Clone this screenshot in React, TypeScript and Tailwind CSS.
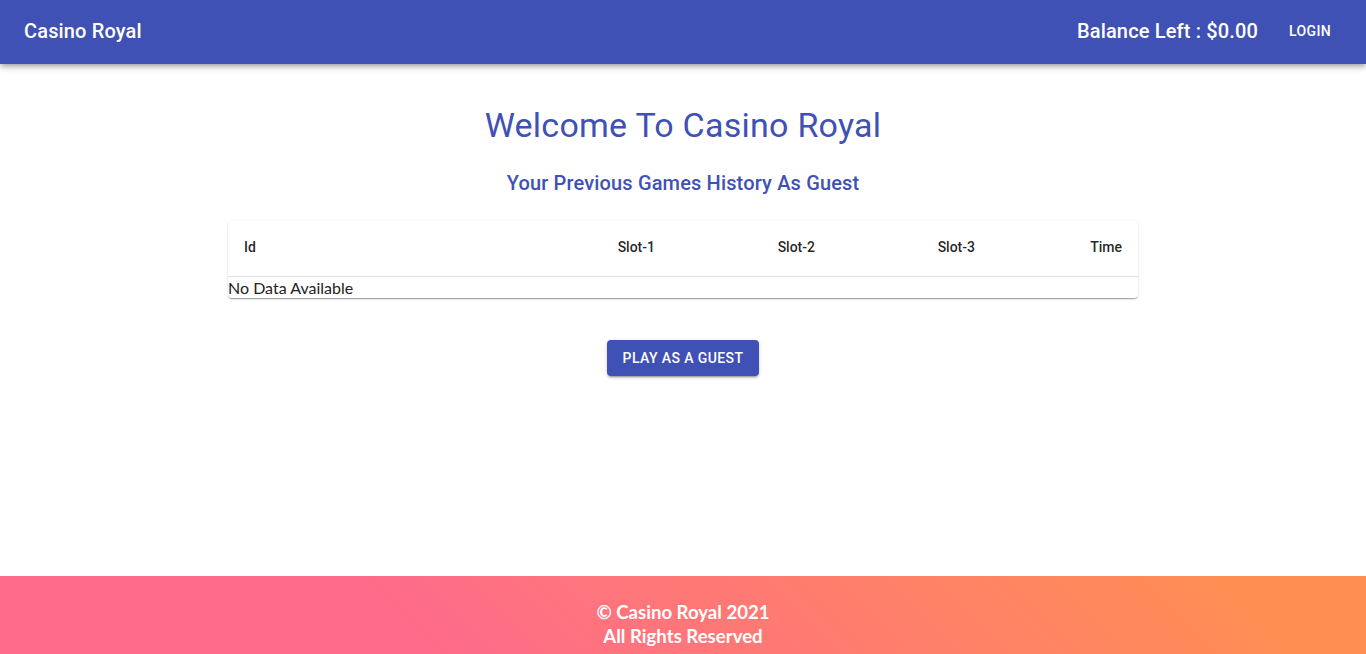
export default function App() {
  const roboto = { fontFamily: "Roboto, 'Liberation Sans', sans-serif" };
  return (
    <div className="flex h-screen flex-col bg-white" style={roboto}>
      <header className="relative z-10 flex h-16 shrink-0 items-center bg-[#3f51b5] px-6 pb-[2px] text-white shadow-[0_2px_4px_-1px_rgba(0,0,0,0.2),0_4px_5px_0_rgba(0,0,0,0.14),0_1px_10px_0_rgba(0,0,0,0.12)]">
        <h6 className="flex-1 text-[20px] font-medium leading-8 tracking-[0.15px]">Casino Royal</h6>
        <span className="mr-5 text-[20px] font-medium leading-8 tracking-[0.15px]">Balance Left : $0.00</span>
        <button className="h-9 min-w-16 rounded px-2 text-[14px] font-medium uppercase tracking-[0.4px] text-white">Login</button>
      </header>
      <main className="flex flex-1 flex-col items-center">
        <h4 className="mt-10 text-[34px] leading-[42px] tracking-[0.25px] text-[#3f51b5]">Welcome To Casino Royal</h4>
        <h6 className="mt-[21px] text-[20px] font-medium leading-8 tracking-[0.15px] text-[#3f51b5]">Your Previous Games History As Guest</h6>
        <div className="mt-[22px] w-[910px] overflow-hidden rounded bg-white shadow-[0_2px_1px_-1px_rgba(0,0,0,0.2),0_1px_1px_0_rgba(0,0,0,0.14),0_1px_3px_0_rgba(0,0,0,0.12)]">
          <div className="grid h-[56px] grid-cols-[1fr_160px_160px_160px_147px] items-center border-b border-[#e0e0e0] pb-[3px] text-[14px] font-medium leading-6 text-[rgba(0,0,0,0.87)]">
            <div className="px-4">Id</div>
            <div className="px-4 text-right">Slot-1</div>
            <div className="px-4 text-right">Slot-2</div>
            <div className="px-4 text-right">Slot-3</div>
            <div className="px-4 text-right">Time</div>
          </div>
          <div className="text-[16px] leading-[21px] text-[#222]" style={{ fontFamily: "Lato, 'Open Sans', sans-serif" }}>No Data Available</div>
        </div>
        <button className="mt-[42px] h-9 w-[152px] rounded bg-[#3f51b5] text-[14px] font-medium uppercase tracking-[0.4px] text-white shadow-[0_3px_1px_-2px_rgba(0,0,0,0.2),0_2px_2px_0_rgba(0,0,0,0.14),0_1px_5px_0_rgba(0,0,0,0.12)]">
          Play As A Guest
        </button>
      </main>
      <footer
        className="h-[78px] shrink-0 bg-[linear-gradient(45deg,#FE6B8B_30%,#FF8E53_90%)] pt-6 text-center text-[18.6px] font-bold leading-6 text-white"
        style={{ fontFamily: "Lato, 'Open Sans', sans-serif" }}
      >
        <div>© Casino Royal 2021</div>
        <div>All Rights Reserved</div>
      </footer>
    </div>
  );
}
